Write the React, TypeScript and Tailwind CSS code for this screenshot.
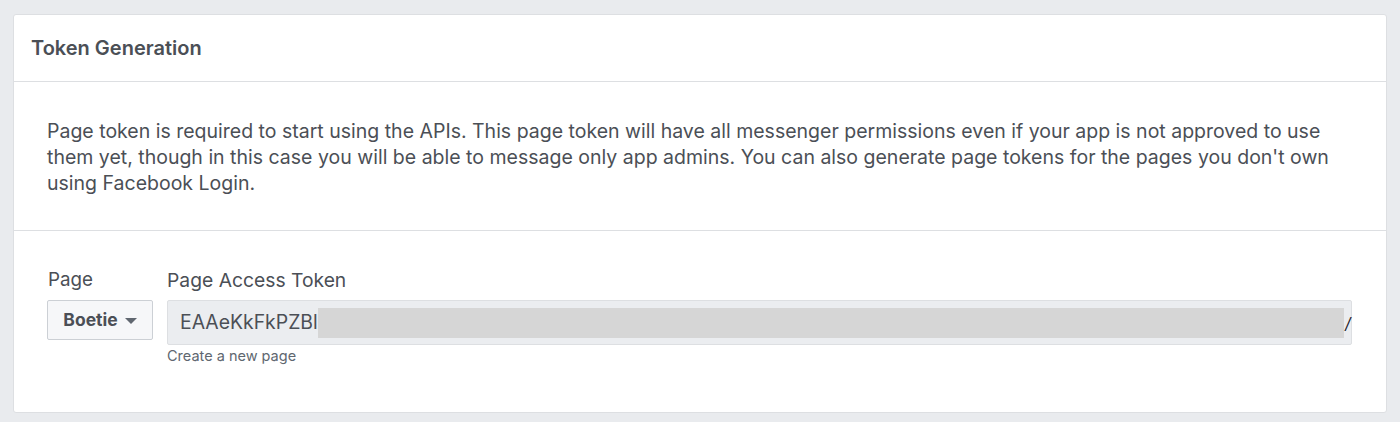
export default function App() {
  return (
    <div className="min-h-[422px] w-[1400px] bg-[#e9ebee] pt-[14px] pl-[13px] font-['Inter',sans-serif]">
      <div className="w-[1374px] h-[399px] bg-white border border-[#dddfe2] rounded-[3px] flex flex-col">
        <div className="h-[67px] border-b border-[#dddfe2] flex items-center pl-[17px]">
          <h2 className="text-[20px] font-semibold text-[#4b4f56]">Token Generation</h2>
        </div>
        <div className="h-[149px] border-b border-[#dddfe2] pl-[33px] pr-[30px] pt-[36px]">
          <p className="text-[19.5px] leading-[26px] text-[#4b4f56]">
            Page token is required to start using the APIs. This page token will have all messenger permissions even if your app is not approved to use them yet, though in this case you will be able to message only app admins. You can also generate page tokens for the pages you don't own using Facebook Login.
          </p>
        </div>
        <div className="flex pl-[33px] pt-[36px] gap-[14px]">
          <div className="flex flex-col">
            <label className="text-[18.8px] text-[#4b4f56] h-[26px] leading-[26px] pl-[1px]">Page</label>
            <button className="mt-[7px] w-[106px] h-[40px] border border-[#ccd0d5] bg-[#f6f7f9] rounded-[2px] flex items-center justify-center gap-[7px] text-[17.5px] font-bold text-[#4b4f56]">
              Boetie
              <span className="w-0 h-0 border-l-[6px] border-r-[6px] border-t-[6px] border-l-transparent border-r-transparent border-t-[#606770] mt-[1px]" />
            </button>
          </div>
          <div className="flex flex-col">
            <label className="text-[19.3px] text-[#4b4f56] h-[26px] leading-[26px]">Page Access Token</label>
            <div className="mt-[7px] w-[1185px] h-[45px] bg-[#ebedf0] border border-[#dddfe2] rounded-[2px] flex items-center pl-[12px] pr-[1px]">
              <span className="text-[19.4px] text-[#4b4f56] leading-none">EAAeKkFkPZBl</span>
              <span className="flex-1 h-[30px] bg-[#d6d6d6] mt-[1px]" />
              <span className="text-[16px] text-[#1d2129] ml-[1px] w-[5px] italic">/</span>
            </div>
            <span className="text-[14.5px] text-[#606770]">Create a new page</span>
          </div>
        </div>
      </div>
    </div>
  );
}
